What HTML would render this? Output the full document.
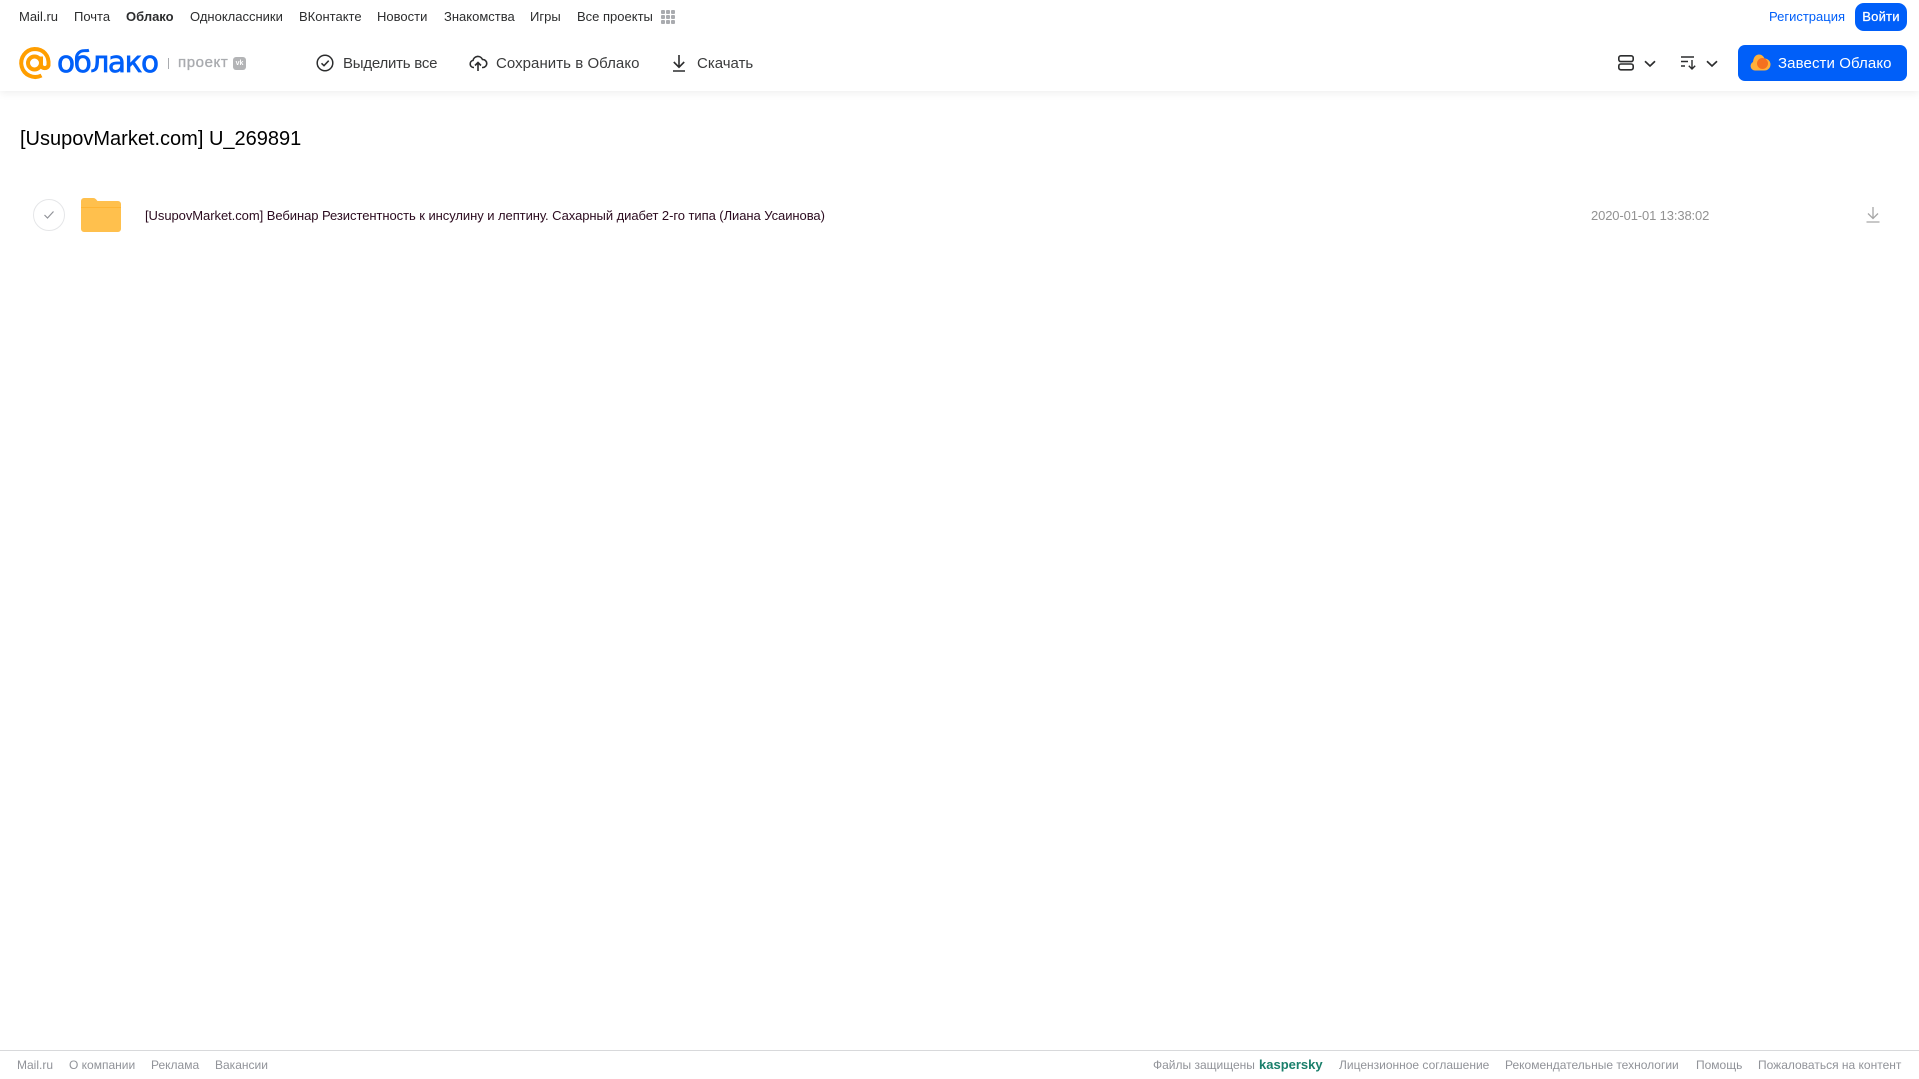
<!DOCTYPE html>
<html lang="ru"><head><meta charset="utf-8"><title>Облако</title>
<style>
html,body{margin:0;padding:0;background:#fff}
body{width:1919px;height:1079px;position:relative;overflow:hidden;font-family:"Liberation Sans",sans-serif}
.t{position:absolute;white-space:nowrap;line-height:20px}
.n{top:7px;font-size:13px;color:#2c2d2e}
.b{top:54px;font-size:15px;color:#3a3b3c;letter-spacing:.1px}
.f{top:1055px;font-size:12px;color:#919399}
svg{position:absolute;overflow:visible}
</style></head><body>
<div style="position:absolute;left:0;top:0;width:1919px;height:91px;background:#fff;box-shadow:0 2px 8px rgba(0,0,0,.07)"></div>

<span class="t n" style="left:19px">Mail.ru</span>
<span class="t n" style="left:74px">Почта</span>
<span class="t n" style="left:126px;font-weight:bold">Облако</span>
<span class="t n" style="left:190px">Одноклассники</span>
<span class="t n" style="left:299px">ВКонтакте</span>
<span class="t n" style="left:377px">Новости</span>
<span class="t n" style="left:444px">Знакомства</span>
<span class="t n" style="left:530px">Игры</span>
<span class="t n" style="left:577px">Все проекты</span>
<svg style="left:660px;top:9px" width="16" height="16" fill="#a9abaf"><rect x="1" y="1" width="4" height="4" rx="1"/><rect x="6" y="1" width="4" height="4" rx="1"/><rect x="11" y="1" width="4" height="4" rx="1"/><rect x="1" y="6" width="4" height="4" rx="1"/><rect x="6" y="6" width="4" height="4" rx="1"/><rect x="11" y="6" width="4" height="4" rx="1"/><rect x="1" y="11" width="4" height="4" rx="1"/><rect x="6" y="11" width="4" height="4" rx="1"/><rect x="11" y="11" width="4" height="4" rx="1"/></svg>

<svg style="left:18px;top:47px" width="33" height="33" fill="none" stroke="#ff9e00" stroke-width="4"><circle cx="16.500" cy="16" r="6.500"/><path d="M23 9.500V18.500a4 4 0 0 0 7.500 0C31.500 8 25 2 16.500 2a14 14 0 1 0 7 26.500"/></svg>
<span class="t" style="left:57px;top:44px;font-size:29.500px;line-height:36px;color:#005ff9;font-family:'DejaVu Sans',sans-serif;letter-spacing:-1.400px;-webkit-text-stroke:.7px #005ff9">облако</span>
<div style="position:absolute;left:168px;top:58px;width:1px;height:11px;background:#a9abaf"></div>
<span class="t" style="left:178px;top:53px;font-size:15px;color:#a9abaf;letter-spacing:.6px;-webkit-text-stroke:.35px #a9abaf">проект</span>
<div style="position:absolute;left:233px;top:57px;width:13px;height:13px;border-radius:3px;background:#b3b4b6;color:#fff;font:bold 7px/13px 'Liberation Sans',sans-serif;text-align:center">vk</div>

<svg style="left:316px;top:54px" width="18" height="18" fill="none" stroke="#2c2d2e" stroke-width="1.500"><circle cx="9" cy="9" r="7.800"/><path d="M5.500 9.300l2.500 2.400 4.700-5"/></svg>
<span class="t b" style="left:343px;letter-spacing:-.23px">Выделить все</span>
<svg style="left:469px;top:54px" width="18" height="18" fill="none" stroke="#2c2d2e" stroke-width="1.600"><path d="M5 13.500H4.500a3.600 3.600 0 0 1-.5-7.100A5 5 0 0 1 13.500 5.500a4 4 0 0 1 .5 8H13M9 17V9M6 11.500L9 8.500l3 3"/></svg>
<span class="t b" style="left:496px;letter-spacing:.05px">Сохранить в Облако</span>
<svg style="left:671px;top:54px" width="16" height="18" fill="none" stroke="#2c2d2e" stroke-width="1.600"><path d="M8 1v12M2.800 8L8 13.200 13.200 8M2 17h12"/></svg>
<span class="t b" style="left:697px;letter-spacing:0">Скачать</span>

<svg style="left:1618px;top:55px" width="16" height="16" fill="none" stroke="#2c2d2e" stroke-width="1.600"><rect x=".8" y=".8" width="14.400" height="5.800" rx="2"/><rect x=".8" y="9" width="14.400" height="5.800" rx="2"/></svg>
<svg style="left:1644px;top:60px" width="12" height="8" fill="none" stroke="#2c2d2e" stroke-width="1.700"><path d="M1 1.300l5 4.700 5-4.700"/></svg>
<svg style="left:1681px;top:56px" width="16" height="14" fill="none" stroke="#2c2d2e" stroke-width="1.400"><path d="M0 1h13M0 5.500h7M0 10h4M11 4v9M7.800 9.800L11 13l3.200-3.200"/></svg>
<svg style="left:1706px;top:60px" width="12" height="8" fill="none" stroke="#2c2d2e" stroke-width="1.700"><path d="M1 1.300l5 4.700 5-4.700"/></svg>

<span class="t" style="left:1769px;top:7px;font-size:13px;color:#005ff9">Регистрация</span>
<div style="position:absolute;left:1855px;top:3px;width:52px;height:28px;border-radius:9px;background:#005ff9;color:#fff;font-size:13px;line-height:28px;text-align:center;letter-spacing:.2px;-webkit-text-stroke:.25px #fff">Войти</div>
<div style="position:absolute;left:1738px;top:45px;width:169px;height:36px;border-radius:7px;background:#005ff9"></div>
<svg style="left:1750px;top:54px" width="20" height="18"><path d="M5 16.500a4.500 4.500 0 0 1-2-8.500C3.500 3 6 .5 9 .5c2.500 0 4.500 1.500 5.500 4a6 6 0 0 1 0 12z" fill="#ffb03a"/><circle cx="12.500" cy="9.500" r="5.500" fill="#f5701f"/></svg>
<span class="t b" style="left:1778px;color:#fff">Завести Облако</span>

<span class="t" style="left:20px;top:125px;font-size:20px;line-height:28px;color:#000">[UsupovMarket.com] U_269891</span>

<div style="position:absolute;left:33px;top:199px;width:30px;height:30px;border:1px solid #e5e6e8;border-radius:50%"></div>
<svg style="left:43px;top:210px" width="12" height="10" fill="none" stroke="#919399" stroke-width="1.200"><path d="M1.500 5l3 3 6-6.500"/></svg>
<svg style="left:81px;top:198px" width="40" height="34"><path d="M0 3a3 3 0 0 1 3-3h9c2 0 3 1 4 2.500l.5.500H37a3 3 0 0 1 3 3v25a3 3 0 0 1-3 3H3a3 3 0 0 1-3-3z" fill="#ffc04d"/><rect y="9" width="40" height="1" fill="#ffb433"/></svg>
<span class="t" style="left:145px;top:206px;font-size:13px;color:#2b0b1f;letter-spacing:-.058px">[UsupovMarket.com] Вебинар Резистентность к инсулину и лептину. Сахарный диабет 2-го типа (Лиана Усаинова)</span>
<span class="t" style="left:1591px;top:206px;font-size:13px;color:#929292;letter-spacing:-.13px">2020-01-01 13:38:02</span>
<svg style="left:1866px;top:206px" width="14" height="17" fill="none" stroke="#a6a6a6" stroke-width="1.300"><path d="M7 1v11M2 7.500L7 12.500l5-5M.5 16h13"/></svg>

<div style="position:absolute;left:0;top:1050px;width:1919px;height:1px;background:#d8d9db"></div>
<span class="t f" style="left:17px">Mail.ru</span>
<span class="t f" style="left:69px">О компании</span>
<span class="t f" style="left:151px">Реклама</span>
<span class="t f" style="left:215px">Вакансии</span>
<span class="t f" style="left:1153px">Файлы защищены</span>
<span class="t" style="left:1259px;top:1055px;font-size:13px;font-weight:bold;color:#1a7f6b">kaspersky</span>
<span class="t f" style="left:1339px">Лицензионное соглашение</span>
<span class="t f" style="left:1505px">Рекомендательные технологии</span>
<span class="t f" style="left:1696px">Помощь</span>
<span class="t f" style="left:1758px">Пожаловаться на контент</span>
</body></html>
